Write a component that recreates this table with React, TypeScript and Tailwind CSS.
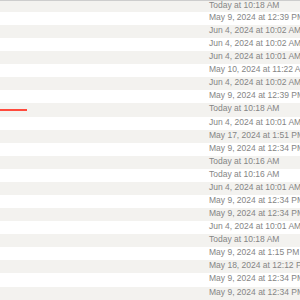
import React from "react";

const dates: string[] = [
  "Today at 10:18 AM",
  "May 9, 2024 at 12:39 PM",
  "Jun 4, 2024 at 10:02 AM",
  "Jun 4, 2024 at 10:02 AM",
  "Jun 4, 2024 at 10:01 AM",
  "May 10, 2024 at 11:22 AM",
  "Jun 4, 2024 at 10:02 AM",
  "May 9, 2024 at 12:39 PM",
  "Today at 10:18 AM",
  "Jun 4, 2024 at 10:01 AM",
  "May 17, 2024 at 1:51 PM",
  "May 9, 2024 at 12:34 PM",
  "Today at 10:16 AM",
  "Today at 10:16 AM",
  "Jun 4, 2024 at 10:01 AM",
  "May 9, 2024 at 12:34 PM",
  "May 9, 2024 at 12:34 PM",
  "Jun 4, 2024 at 10:01 AM",
  "Today at 10:18 AM",
  "May 9, 2024 at 1:15 PM",
  "May 18, 2024 at 12:12 PM",
  "May 9, 2024 at 12:34 PM",
  "May 9, 2024 at 12:34 PM",
  "Jun 4, 2024 at 10:01 AM",
];

// the row with the red drop marker on its left edge
const MARKED = 8;

export default function App() {
  return (
    <div className="w-[300px] h-[300px] overflow-hidden bg-white font-['Liberation_Sans',Arial,sans-serif] text-[8.5px] text-[#858585]">
      <div className="h-px bg-[#cdcdcd]" />
      {dates.map((d, i) => (
        <div
          key={i}
          className={`flex items-start overflow-hidden ${
            i === 0 ? "h-[10.93px] leading-[9px]" : "h-[13.08px] leading-[11.7px]"
          } ${i % 2 === 0 ? "bg-[#f3f2ef]" : "bg-white"}`}
        >
          <div className="w-[209px] shrink-0">
            {i === MARKED && <div className="mt-[5.9px] h-[2px] w-[27px] bg-[#ff4a3d]" />}
          </div>
          <span className="whitespace-nowrap">{d}</span>
        </div>
      ))}
    </div>
  );
}
